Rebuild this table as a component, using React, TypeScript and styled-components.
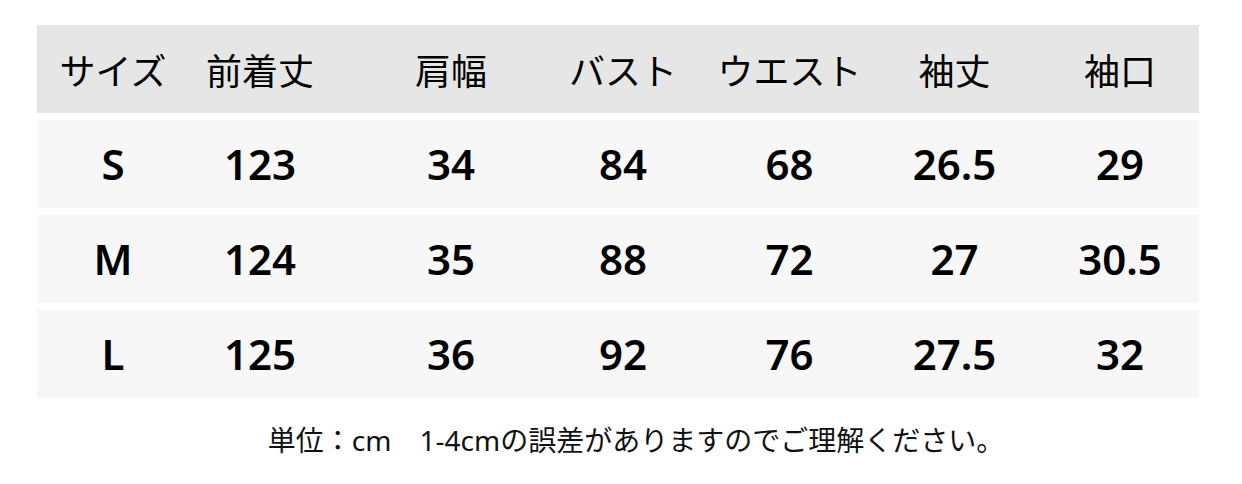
import React from 'react'
import styled, { createGlobalStyle } from 'styled-components'

const GlobalStyle = createGlobalStyle`
  html, body {
    margin: 0;
    padding: 0;
    background: #ffffff;
  }
`

// column widths picked so the text centres land where they do in the chart
const columns = [
  { width: 150, shift: 1 },
  { width: 170, shift: -12 },
  { width: 180, shift: 4 },
  { width: 170, shift: 1 },
  { width: 165, shift: 0 },
  { width: 165, shift: 0 },
  { width: 162, shift: 2 },
]

const headers = ['サイズ', '前着丈', '肩幅', 'バスト', 'ウエスト', '袖丈', '袖口']

const sizes = [
  ['S', '123', '34', '84', '68', '26.5', '29'],
  ['M', '124', '35', '88', '72', '27', '30.5'],
  ['L', '125', '36', '92', '76', '27.5', '32'],
]

const Page = styled.div`
  width: 1242px;
  height: 484px;
  padding: 25px 0 0 37px;
  box-sizing: border-box;
`

const Table = styled.div`
  width: 1162px;
  display: flex;
  flex-direction: column;
  gap: 7px;
`

const Row = styled.div<{ $head?: boolean }>`
  display: grid;
  grid-template-columns: ${columns.map(c => `${c.width}px`).join(' ')};
  height: 88px;
  align-items: center;
  background: ${p => (p.$head ? '#e6e6e6' : '#f7f7f7')};
`

const Cell = styled.div<{ $head?: boolean; $shift: number }>`
  text-align: center;
  transform: translateX(${p => p.$shift}px);
  color: #000;
  white-space: nowrap;
  font-family: ${p =>
    p.$head ? '"Noto Sans CJK JP", sans-serif' : '"Noto Sans", "Open Sans", sans-serif'};
  font-size: ${p => (p.$head ? '36px' : '42px')};
  font-weight: ${p => (p.$head ? 400 : 600)};
  line-height: 1;
`

const Note = styled.p`
  width: 1162px;
  margin: 25px 0 0;
  padding-left: 36px;
  box-sizing: border-box;
  text-align: center;
  font-family: "Noto Sans", "Noto Sans CJK JP", sans-serif;
  font-size: 28px;
  line-height: 34px;
  color: #111;
`

export default function App() {
  return (
    <Page>
      <GlobalStyle />
      <Table>
        <Row $head>
          {headers.map((h, i) => (
            <Cell key={h} $head $shift={columns[i].shift}>
              {h}
            </Cell>
          ))}
        </Row>
        {sizes.map(row => (
          <Row key={row[0]}>
            {row.map((v, i) => (
              <Cell key={i} $shift={columns[i].shift}>
                {v}
              </Cell>
            ))}
          </Row>
        ))}
      </Table>
      <Note>単位：cm　1-4cmの誤差がありますのでご理解ください。</Note>
    </Page>
  )
}
